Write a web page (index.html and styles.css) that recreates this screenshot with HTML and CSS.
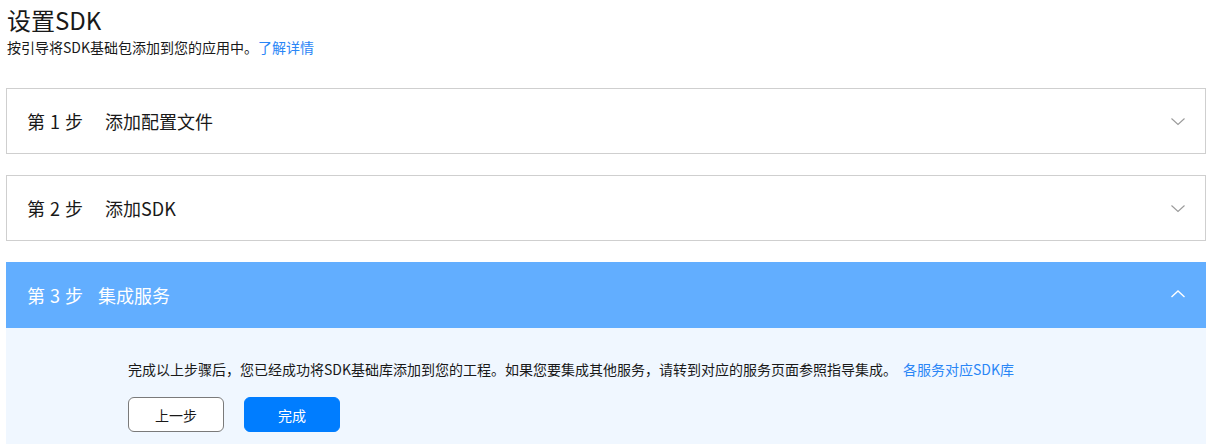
FILE: index.html
```html
<!DOCTYPE html>
<html lang="zh-CN">
<head>
<meta charset="utf-8">
<title>设置SDK</title>
<link rel="stylesheet" href="styles.css">
</head>
<body>
<div class="page">
  <header class="intro">
    <h1 class="title">设置SDK</h1>
    <p class="subtitle">按引导将SDK基础包添加到您的应用中。<a class="link" href="#">了解详情</a></p>
  </header>

  <section class="step">
    <div class="step-head">
      <div class="step-label"><span class="step-no">第 1 步</span><span class="step-name">添加配置文件</span></div>
      <svg class="chev" width="14" height="8" viewBox="0 0 14 8"><polyline points="0.5,0.5 7,6.5 13.5,0.5" fill="none" stroke="#9a9a9a" stroke-width="1.1"/></svg>
    </div>
  </section>

  <section class="step">
    <div class="step-head">
      <div class="step-label"><span class="step-no">第 2 步</span><span class="step-name">添加SDK</span></div>
      <svg class="chev" width="14" height="8" viewBox="0 0 14 8"><polyline points="0.5,0.5 7,6.5 13.5,0.5" fill="none" stroke="#9a9a9a" stroke-width="1.1"/></svg>
    </div>
  </section>

  <section class="step step-open">
    <div class="step-head">
      <div class="step-label"><span class="step-no step-no-open">第 3 步</span><span class="step-name">集成服务</span></div>
      <svg class="chev" width="14" height="8" viewBox="0 0 14 8"><polyline points="0.5,7 7,1 13.5,7" fill="none" stroke="#ffffff" stroke-width="1.4"/></svg>
    </div>
    <div class="step-body">
      <p class="desc">完成以上步骤后，您已经成功将SDK基础库添加到您的工程。如果您要集成其他服务，请转到对应的服务页面参照指导集成。<a class="link link-gap" href="#">各服务对应SDK库</a></p>
      <div class="actions">
        <button class="btn btn-ghost" type="button">上一步</button>
        <button class="btn btn-primary" type="button">完成</button>
      </div>
    </div>
  </section>
</div>
</body>
</html>
```

FILE: styles.css
```css
* { box-sizing: border-box; }

html, body {
  margin: 0;
  padding: 0;
  background: #ffffff;
}

body {
  font-family: "Noto Sans CJK SC", "Noto Sans", sans-serif;
  color: #191919;
}

.page {
  padding: 0 11px 0 6px;
  display: flex;
  flex-direction: column;
}

.intro {
  padding-left: 1px;
  margin-bottom: 31px;
}

.title {
  margin: 3px 0 0;
  font-size: 24px;
  font-weight: 400;
  line-height: 34px;
  color: #191919;
}

.subtitle {
  margin: 0;
  font-size: 14px;
  line-height: 20px;
  color: #191919;
}

.link {
  color: #2a86f6;
  text-decoration: none;
}

.link-gap {
  margin-left: 6px;
}

.step {
  border: 1px solid #cfcfcf;
  margin-bottom: 21px;
}

.step-head {
  height: 64px;
  display: flex;
  align-items: center;
  justify-content: space-between;
  padding: 0 20px 0 20px;
}

.step-label {
  font-size: 18px;
  color: #191919;
  display: flex;
  align-items: center;
}

.step-no {
  margin-right: 22px;
  word-spacing: 1px;
}

.step-no-open {
  margin-right: 15px;
}

.chev {
  display: block;
  margin-top: 2px;
}

.step-open {
  border: none;
  margin-bottom: 0;
}

.step-open .step-head {
  height: 66px;
  background: #62aeff;
  padding-left: 21px;
  padding-right: 21px;
}

.step-open .step-label {
  color: #ffffff;
}

.step-open .chev {
  margin-top: -2px;
}

.step-body {
  background: #f0f7ff;
  padding: 31px 20px 24px 122px;
}

.desc {
  margin: 0;
  font-size: 14px;
  line-height: 20px;
  color: #191919;
}

.actions {
  display: flex;
  gap: 20px;
  margin-top: 18px;
}

.btn {
  width: 96px;
  height: 35px;
  border-radius: 6px;
  font-family: "Noto Sans CJK SC", "Noto Sans", sans-serif;
  font-size: 14px;
  cursor: pointer;
}

.btn-ghost {
  background: #ffffff;
  border: 1px solid #7a7a7a;
  color: #191919;
}

.btn-primary {
  background: #007dff;
  border: 1px solid #007dff;
  color: #ffffff;
}
```
